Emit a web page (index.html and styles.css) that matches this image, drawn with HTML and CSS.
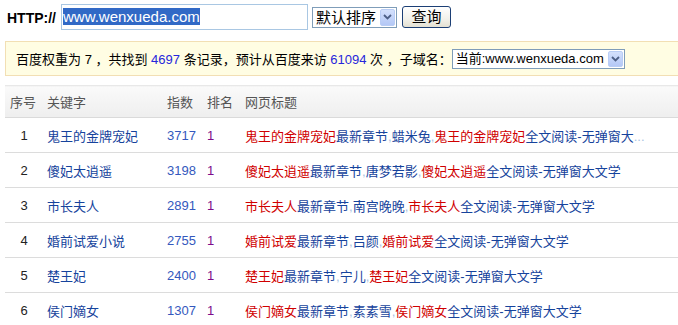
FILE: index.html
```html
<!DOCTYPE html>
<html lang="zh-CN">
<head>
  <meta charset="UTF-8">
  <title>百度权重查询</title>
  <link rel="stylesheet" href="styles.css">
</head>
<body>
  <div class="page">
    <form class="search">
      <label class="proto">HTTP://</label>
      <div class="url"><span class="picked">www.wenxueda.com</span></div>
      <div class="dropdown sort">
        <span class="value">默认排序</span>
        <i class="arrow"><svg width="9" height="6" viewBox="0 0 9 6"><path d="M1 1l3.5 3.5L8 1" fill="none" stroke="#4d5f86" stroke-width="1.8"/></svg></i>
      </div>
      <button type="button" class="query">查询</button>
    </form>

    <div class="summary">
      <span>百度权重为 <em class="plain">7</em> ，共找到 <em>4697</em> 条记录，预计从百度来访 <em>61094</em> 次 ，子域名：</span>
      <div class="dropdown domain">
        <span class="value">当前:www.wenxueda.com</span>
        <i class="arrow"><svg width="9" height="6" viewBox="0 0 9 6"><path d="M1 1l3.5 3.5L8 1" fill="none" stroke="#4d5f86" stroke-width="1.8"/></svg></i>
      </div>
    </div>

    <table class="results">
      <thead>
        <tr>
          <th class="no">序号</th>
          <th class="kw">关键字</th>
          <th class="idx">指数</th>
          <th class="rank">排名</th>
          <th>网页标题</th>
        </tr>
      </thead>
      <tbody>
        <tr>
          <td class="no">1</td>
          <td class="kw"><a>鬼王的金牌宠妃</a></td>
          <td class="idx">3717</td>
          <td class="rank">1</td>
          <td class="title"><b>鬼王的金牌宠妃</b>最新章节<i>,</i>蜡米兔<i>,</i><b>鬼王的金牌宠妃</b>全文阅读-无弹窗大<i>...</i></td>
        </tr>
        <tr>
          <td class="no">2</td>
          <td class="kw"><a>傻妃太逍遥</a></td>
          <td class="idx">3198</td>
          <td class="rank">1</td>
          <td class="title"><b>傻妃太逍遥</b>最新章节<i>,</i>唐梦若影<i>,</i><b>傻妃太逍遥</b>全文阅读-无弹窗大文学</td>
        </tr>
        <tr>
          <td class="no">3</td>
          <td class="kw"><a>市长夫人</a></td>
          <td class="idx">2891</td>
          <td class="rank">1</td>
          <td class="title"><b>市长夫人</b>最新章节<i>,</i>南宫晚晚<i>,</i><b>市长夫人</b>全文阅读-无弹窗大文学</td>
        </tr>
        <tr>
          <td class="no">4</td>
          <td class="kw"><a>婚前试爱小说</a></td>
          <td class="idx">2755</td>
          <td class="rank">1</td>
          <td class="title"><b>婚前试爱</b>最新章节<i>,</i>吕颜<i>,</i><b>婚前试爱</b>全文阅读-无弹窗大文学</td>
        </tr>
        <tr>
          <td class="no">5</td>
          <td class="kw"><a>楚王妃</a></td>
          <td class="idx">2400</td>
          <td class="rank">1</td>
          <td class="title"><b>楚王妃</b>最新章节<i>,</i>宁儿<i>,</i><b>楚王妃</b>全文阅读-无弹窗大文学</td>
        </tr>
        <tr>
          <td class="no">6</td>
          <td class="kw"><a>侯门嫡女</a></td>
          <td class="idx">1307</td>
          <td class="rank">1</td>
          <td class="title"><b>侯门嫡女</b>最新章节<i>,</i>素素雪<i>,</i><b>侯门嫡女</b>全文阅读-无弹窗大文学</td>
        </tr>
      </tbody>
    </table>
  </div>
</body>
</html>
```

FILE: styles.css
```css
html{
  background-color: white;
}
body{
  margin: 0;
  overflow: hidden;
  font-family: "Liberation Sans", "Noto Sans CJK SC", sans-serif;
  font-size: 13px;
  color: #000;
}
.page{
  width: 700px;
  padding-left: 5px;
}

/* search bar */
.search{
  display: flex;
  align-items: center;
  height: 26px;
  margin: 4px 0 0;
}
.proto{
  font-size: 14px;
  font-weight: bold;
  margin: 0 5px 0 2px;
  padding-top: 2px;
}
.url{
  box-sizing: border-box;
  width: 247px;
  height: 26px;
  border: 1px solid #a9c7e3;
  padding: 3px 1px;
  font-size: 15px;
}
.picked{
  display: inline-block;
  background-color: #3169c6;
  color: white;
  line-height: 17px;
}
.dropdown{
  box-sizing: border-box;
  display: flex;
  align-items: center;
  justify-content: space-between;
  border: 1px solid #7f9db9;
  background-color: white;
  padding: 1px 1px 1px 3px;
}
.arrow{
  box-sizing: border-box;
  display: flex;
  align-items: center;
  justify-content: center;
  width: 15px;
  align-self: stretch;
  border: 1px solid #b9cdf5;
  border-radius: 2px;
  background: linear-gradient(#d3e0fc, #b4c8f6);
}
.sort{
  width: 85px;
  height: 21px;
  margin-left: 4px;
  font-size: 15px;
  line-height: 17px;
}
.query{
  box-sizing: border-box;
  width: 49px;
  height: 22px;
  margin-left: 5px;
  padding: 0;
  border: 1px solid #1c3f75;
  border-radius: 3px;
  background: linear-gradient(#ffffff, #f2f1ea 60%, #e3e0d2);
  font-family: "Liberation Sans", "Noto Sans CJK SC", sans-serif;
  font-size: 15px;
  line-height: 18px;
  color: #000;
}

/* summary strip */
.summary{
  box-sizing: border-box;
  display: flex;
  align-items: center;
  height: 35px;
  margin-top: 11px;
  border: 1px solid #f2dfb4;
  background-color: #fffde3;
  padding-left: 10px;
  white-space: nowrap;
}
.summary em{
  font-style: normal;
  color: #2626dc;
}
.summary em.plain{
  color: #000;
}
.domain{
  width: 173px;
  height: 20px;
  line-height: 16px;
}

/* results table */
.results{
  width: 100%;
  margin-top: 9px;
  border-collapse: collapse;
}
.results th{
  height: 31px;
  padding: 0 0 0 4px;
  text-align: left;
  font-weight: normal;
  color: #555;
  border-top: 1px solid #e8e8e8;
  border-bottom: 1px solid #dadada;
  background: linear-gradient(#fafafa, #eeeeee);
}
.results td{
  height: 34px;
  padding: 0 0 0 4px;
  border-bottom: 1px solid #dcdcdc;
  white-space: nowrap;
}
.results .no{
  width: 38px;
  padding-left: 0;
  box-sizing: border-box;
}
.results th.no{
  padding-left: 5px;
}
.results td.no{
  text-align: center;
  color: #222;
}
.results .kw{
  width: 116px;
}
.results .idx{
  width: 36px;
}
.results .rank{
  width: 34px;
}
.results td.kw a{
  color: #16439c;
}
.results td.idx{
  color: #3458bd;
}
.results td.rank{
  color: #7d0c8a;
}
.title{
  color: #16439c;
}
.title b{
  font-weight: normal;
  color: #d00000;
}
.title i{
  font-style: normal;
  color: #a9c2e2;
}
```
